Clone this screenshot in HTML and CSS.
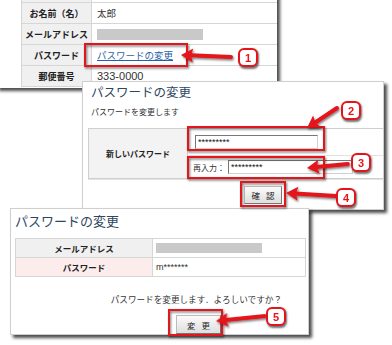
FILE: index.html
```html
<!DOCTYPE html>
<html lang="ja">
<head>
	<meta charset="UTF-8">
	<title>パスワードの変更</title>
	<link rel="stylesheet" href="styles.css">
</head>
<body>
	<div class="stage">
		<!-- 会員情報 -->
		<div class="win win-profile">
			<div class="grid grid-profile">
				<div class="th"></div><div class="td"></div>
				<div class="th">お名前（名）</div><div class="td">太郎</div>
				<div class="th">メールアドレス</div><div class="td"><span class="blur blur-a"></span></div>
				<div class="th">パスワード</div><div class="td"><a class="link" href="#">パスワードの変更</a></div>
				<div class="th">郵便番号</div><div class="td num">333-0000</div>
			</div>
		</div>

		<!-- 入力 -->
		<div class="win win-edit">
			<h2 class="title">パスワードの変更</h2>
			<p class="lead">パスワードを変更します</p>
			<div class="form">
				<div class="form-label">新しいパスワード</div>
				<div class="form-fields">
					<div class="field-row first"><span class="input input-a">*********</span></div>
					<div class="field-row"><span class="re">再入力：</span><span class="input input-b">*********</span></div>
				</div>
			</div>
			<div class="btn-row btn-row-edit"><span class="btn btn-ok">確認</span></div>
		</div>

		<!-- 確認 -->
		<div class="win win-confirm">
			<h2 class="title title-lg">パスワードの変更</h2>
			<div class="grid grid-confirm">
				<div class="th">メールアドレス</div><div class="td"><span class="blur blur-b"></span></div>
				<div class="th th-pink">パスワード</div><div class="td num">m*******</div>
			</div>
			<p class="ask">パスワードを変更します．よろしいですか？</p>
			<div class="btn-row btn-row-confirm"><span class="btn btn-change">変更</span></div>
		</div>

		<svg class="marks" width="392" height="345" viewBox="0 0 392 345">
			<defs>
				<filter id="sh" x="-20%" y="-20%" width="140%" height="160%">
					<feDropShadow dx="1" dy="1.5" stdDeviation="0.9" flood-color="#000" flood-opacity="0.55"/>
				</filter>
				<g id="arrow-head">
					<polygon points="0,0 12,-7 10,0 12,7"/>
				</g>
			</defs>
			<g fill="none" stroke="#e3141b" stroke-width="2" filter="url(#sh)">
				<rect x="85" y="44" width="102" height="22"/>
				<rect x="188" y="127" width="136" height="23"/>
				<rect x="188" y="157" width="136" height="21"/>
				<rect x="241" y="182" width="44" height="24"/>
				<rect x="169" y="310" width="53" height="25"/>
			</g>
			<g fill="#e3141b" stroke="#e3141b" stroke-linecap="round" filter="url(#sh)">
				<g transform="translate(181 55) rotate(2.3)">
					<line x1="9" y1="0" x2="50" y2="0" stroke-width="4"/>
					<use href="#arrow-head" stroke="none"/>
				</g>
				<g transform="translate(307 128) rotate(-33.7)">
					<line x1="9" y1="0" x2="36" y2="0" stroke-width="4"/>
					<use href="#arrow-head" stroke="none"/>
				</g>
				<g transform="translate(307 168) rotate(-5.7)">
					<line x1="9" y1="0" x2="41" y2="0" stroke-width="4"/>
					<use href="#arrow-head" stroke="none"/>
				</g>
				<g transform="translate(286 193) rotate(3.4)">
					<line x1="9" y1="0" x2="50" y2="0" stroke-width="4"/>
					<use href="#arrow-head" stroke="none"/>
				</g>
				<g transform="translate(216 321) rotate(-5.8)">
					<line x1="9" y1="0" x2="49" y2="0" stroke-width="4"/>
					<use href="#arrow-head" stroke="none"/>
				</g>
			</g>
		</svg>

		<span class="badge b1">1</span>
		<span class="badge b2">2</span>
		<span class="badge b3">3</span>
		<span class="badge b4">4</span>
		<span class="badge b5">5</span>
	</div>
</body>
</html>
```

FILE: styles.css
```css
*{
	margin:0;
	padding:0;
	box-sizing:border-box;
}
html,body{
	width:100%;
	height:100%;
	overflow:hidden;
	background:#fff;
}
body{
	font-family:"Liberation Sans","Noto Sans CJK JP",sans-serif;
	color:#333;
}
.stage{
	position:relative;
	width:392px;
	height:345px;
	overflow:hidden;
}

/* windows (screenshots laid on a canvas) */
.win{
	position:absolute;
	background:#fff;
	border:1px solid #cfcfcf;
	box-shadow:3px 3px 3px rgba(0,0,0,0.7);
}
.win-profile{
	left:-4px;
	top:-20px;
	width:281px;
	height:108px;
	border:none;
	padding-left:25px;
}
.win-edit{
	left:82px;
	top:81px;
	width:302px;
	height:129px;
	padding-left:5px;
}
.win-confirm{
	left:10px;
	top:208px;
	width:299px;
	height:127px;
	padding-left:4px;
}

/* tables */
.grid{
	display:grid;
	border-left:1px solid #d6d6d6;
}
.grid-profile{
	grid-template-columns:70px 1fr;
	grid-template-rows:23px repeat(4,21px);
}
.grid-confirm{
	grid-template-columns:137px 1fr;
	grid-template-rows:19px 19px;
	width:291px;
	margin-top:7px;
	border-top:1px solid #d6d6d6;
	border-right:1px solid #d6d6d6;
}
.th,.td{
	display:flex;
	align-items:center;
	border-bottom:1px solid #d6d6d6;
	border-right:1px solid #d6d6d6;
}
.th{
	justify-content:center;
	background:#f0f0f0;
	font-weight:bold;
	font-size:9px;
	color:#222;
}
.grid-confirm .th{
	font-size:8.5px;
}
.th-pink{
	background:#fdecec;
}
.td{
	padding-left:5px;
	font-size:9.5px;
	border-right:none;
}
.grid-confirm .td{
	padding-left:3px;
}
.num{
	font-size:11px;
}
.grid-confirm .num{
	font-size:9px;
}
.blur{
	display:block;
	height:11px;
	background:#c9c9c9;
}
.blur-a{
	width:106px;
}
.blur-b{
	width:106px;
	height:10px;
}
.link{
	color:#2a5fa8;
	text-decoration:underline;
	font-size:9.5px;
}

/* headings */
.title{
	font-size:12.5px;
	line-height:17px;
	font-weight:normal;
	color:#2d4660;
	padding:3px 0 0 3px;
}
.title-lg{
	font-size:13px;
	line-height:18px;
	padding:4px 0 0 0;
}
.lead{
	font-size:8px;
	line-height:12px;
	margin:5px 0 0 3px;
}

/* form */
.form{
	display:flex;
	margin-top:9px;
	height:51px;
	border:1px solid #cfcfcf;
	border-right:none;
	box-shadow:0 1px 0 #e4e4e4;
}
.form-label{
	width:99px;
	display:flex;
	align-items:center;
	justify-content:center;
	background:#f3f3f3;
	border-right:1px solid #d6d6d6;
	font-size:8px;
	font-weight:bold;
	color:#222;
}
.form-fields{
	flex:1;
	display:flex;
	flex-direction:column;
}
.field-row{
	display:flex;
	align-items:center;
	height:22px;
	padding-left:5px;
}
.field-row.first{
	height:27px;
	padding-left:7px;
	border-bottom:1px solid #e2e2e2;
}
.re{
	font-size:8px;
	width:35px;
}
.input{
	display:flex;
	align-items:center;
	height:14px;
	padding-left:2px;
	border:1px solid;
	border-color:#777 #d0d0d0 #d0d0d0 #777;
	background:#fff;
	font-family:"Liberation Sans",sans-serif;
	font-size:9px;
	color:#111;
}
.input-a{
	width:123px;
}
.input-b{
	width:125px;
}

/* buttons */
.btn-row{
	display:flex;
}
.btn-row-edit{
	padding:7px 0 0 156px;
}
.btn-row-confirm{
	padding:9px 0 0 161px;
}
.btn{
	display:flex;
	align-items:center;
	justify-content:center;
	border:1px solid;
	border-color:#bbb #777 #777 #bbb;
	background:linear-gradient(#fbfbfb,#dedede);
	font-size:8.5px;
	letter-spacing:0.7em;
	text-indent:0.7em;
	color:#222;
}
.btn-ok{
	width:38px;
	height:18px;
}
.btn-change{
	width:45px;
	height:19px;
}
.ask{
	margin-top:17px;
	padding-right:26px;
	text-align:right;
	font-size:8.6px;
	line-height:12px;
}

/* overlays */
.marks{
	position:absolute;
	left:0;
	top:0;
}
.badge{
	position:absolute;
	width:20px;
	height:19px;
	display:flex;
	align-items:center;
	justify-content:center;
	background:#fff;
	border:2.5px solid #e3141b;
	border-radius:6px;
	box-shadow:1px 1.5px 2px rgba(0,0,0,0.55);
	color:#e3141b;
	font-weight:bold;
	font-size:11px;
}
.b1{ left:238px; top:48px; }
.b2{ left:341px; top:101px; }
.b3{ left:351px; top:153px; }
.b4{ left:336px; top:188px; }
.b5{ left:266px; top:307px; }
```
